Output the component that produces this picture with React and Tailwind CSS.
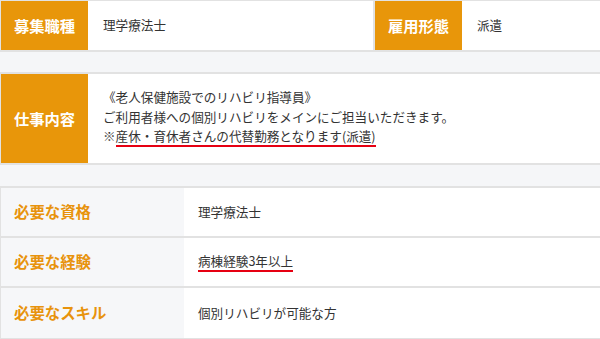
import React from 'react'

const font = { fontFamily: '"Noto Sans CJK JP", "Noto Sans", sans-serif' }

function Marker({ children }) {
  return <span className="border-b-2 border-[#e60012]">{children}</span>
}

function DetailRow({ label, children, last }) {
  return (
    <div className={`flex h-[50px] ${last ? '' : 'border-b-2 border-[#e2e2e2]'}`}>
      <div className="w-[183px] bg-[#f6f7f9] flex items-center pl-[13px] text-[15.4px] font-bold text-[#e8930c]">
        {label}
      </div>
      <div className="flex-1 bg-white flex items-center pl-[14px] text-[12.6px] text-[#333]">
        {children}
      </div>
    </div>
  )
}

export default function App() {
  return (
    <div className="w-[600px] h-[339px] overflow-hidden bg-[#f5f6f8]" style={font}>
      {/* Job type / employment */}
      <div className="flex h-[52px] border-t border-l border-b-2 border-[#e2e2e2]">
        <div className="w-[87px] bg-[#e8960a] flex items-center justify-center text-white font-bold text-[15.3px]">
          募集職種
        </div>
        <div className="w-[285px] bg-white flex items-center pl-[15px] text-[12.6px] text-[#333]">
          理学療法士
        </div>
        <div className="w-[2px] bg-[#e2e2e2]"></div>
        <div className="w-[87px] bg-[#e8960a] flex items-center justify-center text-white font-bold text-[15.3px]">
          雇用形態
        </div>
        <div className="flex-1 bg-white flex items-center pl-[15px] text-[12.6px] text-[#333]">
          派遣
        </div>
      </div>

      {/* Job description */}
      <div className="mt-[20px] flex h-[93px] border-t-2 border-l border-b-2 border-[#e2e2e2]">
        <div className="w-[87px] bg-[#e8960a] flex items-center justify-center text-white font-bold text-[15.3px]">
          仕事内容
        </div>
        <div className="flex-1 bg-white flex flex-col justify-center pl-[15px] text-[12.6px] leading-[19.5px] text-[#333] pb-[4px]">
          <p>《老人保健施設でのリハビリ指導員》</p>
          <p>ご利用者様への個別リハビリをメインにご担当いただきます。</p>
          <p>※<Marker>産休・育休者さんの代替勤務となります(派遣)</Marker></p>
        </div>
      </div>

      {/* Requirements */}
      <div className="mt-[21px] border-t-2 border-l border-b-2 border-[#e2e2e2]">
        <DetailRow label="必要な資格">理学療法士</DetailRow>
        <DetailRow label="必要な経験">
          <Marker>病棟経験3年以上</Marker>
        </DetailRow>
        <DetailRow label="必要なスキル" last>個別リハビリが可能な方</DetailRow>
      </div>
    </div>
  )
}
